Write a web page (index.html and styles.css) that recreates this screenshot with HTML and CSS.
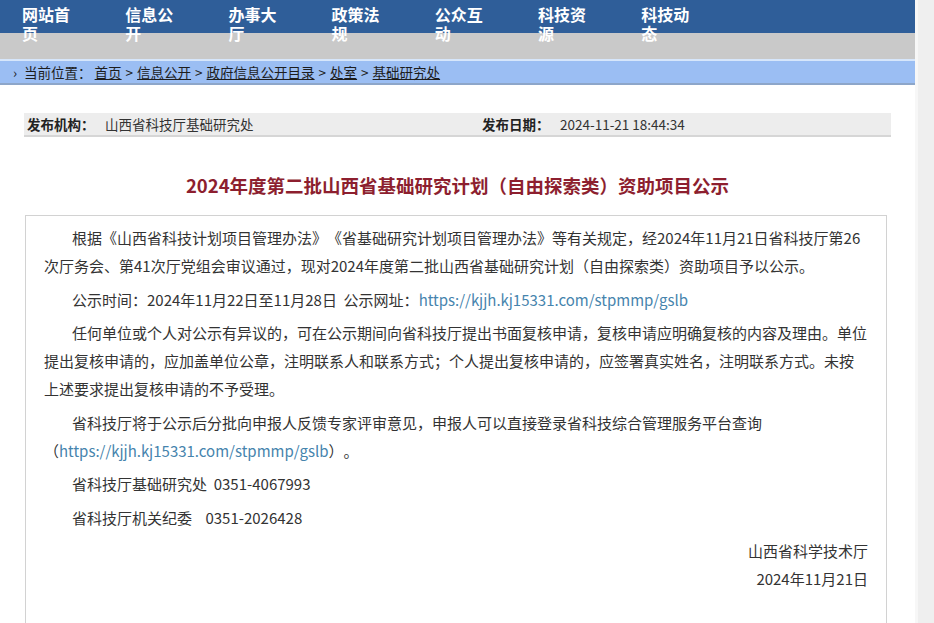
FILE: index.html
```html
<!DOCTYPE html>
<html lang="zh-CN">
<head>
<meta charset="utf-8">
<title>2024年度第二批山西省基础研究计划（自由探索类）资助项目公示</title>
<link rel="stylesheet" href="styles.css">
</head>
<body>
<div class="page">
  <div class="main">
    <nav class="topnav">
      <ul class="navlist">
        <li class="navitem"><span class="navtext">网站首页</span></li>
        <li class="navitem"><span class="navtext">信息公开</span></li>
        <li class="navitem"><span class="navtext">办事大厅</span></li>
        <li class="navitem"><span class="navtext">政策法规</span></li>
        <li class="navitem"><span class="navtext">公众互动</span></li>
        <li class="navitem"><span class="navtext">科技资源</span></li>
        <li class="navitem"><span class="navtext">科技动态</span></li>
      </ul>
    </nav>
    <div class="band"></div>
    <div class="crumb">
      <span class="crumb-arrow">›</span>
      <span class="crumb-label">当前位置：</span>
      <a class="crumb-link" href="#">首页</a><span class="crumb-sep">&gt;</span><a class="crumb-link" href="#">信息公开</a><span class="crumb-sep">&gt;</span><a class="crumb-link" href="#">政府信息公开目录</a><span class="crumb-sep">&gt;</span><a class="crumb-link" href="#">处室</a><span class="crumb-sep">&gt;</span><a class="crumb-link" href="#">基础研究处</a>
    </div>
    <div class="info">
      <span class="info-label">发布机构：</span>
      <span class="info-value">山西省科技厅基础研究处</span>
      <span class="info-label">发布日期：</span>
      <span class="info-value">2024-11-21 18:44:34</span>
    </div>
    <h1 class="title">2024年度第二批山西省基础研究计划（自由探索类）资助项目公示</h1>
    <div class="article">
      <p class="para indent">根据《山西省科技计划项目管理办法》《省基础研究计划项目管理办法》等有关规定，经2024年11月21日省科技厅第26次厅务会、第41次厅党组会审议通过，现对2024年度第二批山西省基础研究计划（自由探索类）资助项目予以公示。</p>
      <p class="para indent">公示时间：2024年11月22日至11月28日&nbsp;&nbsp;公示网址：<a class="url" href="#">https://kjjh.kj15331.com/stpmmp/gslb</a></p>
      <p class="para indent">任何单位或个人对公示有异议的，可在公示期间向省科技厅提出书面复核申请，复核申请应明确复核的内容及理由。单位提出复核申请的，应加盖单位公章，注明联系人和联系方式；个人提出复核申请的，应签署真实姓名，注明联系方式。未按上述要求提出复核申请的不予受理。</p>
      <p class="para indent">省科技厅将于公示后分批向申报人反馈专家评审意见，申报人可以直接登录省科技综合管理服务平台查询（<a class="url" href="#">https://kjjh.kj15331.com/stpmmp/gslb</a>）。</p>
      <p class="para indent">省科技厅基础研究处&nbsp;&nbsp;0351-4067993</p>
      <p class="para indent">省科技厅机关纪委&nbsp;&nbsp;&nbsp;&nbsp;0351-2026428</p>
      <p class="para right">山西省科学技术厅<br>2024年11月21日</p>
    </div>
  </div>
  <div class="rail"></div>
</div>
</body>
</html>
```
FILE: styles.css
```css
* { box-sizing: border-box; }
html, body {
  margin: 0;
  padding: 0;
  height: 100%;
  overflow: hidden;
  background: #ffffff;
  font-family: "Noto Sans CJK SC", "Noto Sans", sans-serif;
  color: #333333;
  text-spacing-trim: space-all;
}
.page {
  display: flex;
  height: 100%;
}
.main {
  width: 915px;
  flex: 0 0 915px;
  background: #ffffff;
}
.rail {
  flex: 1;
  background: #efefef;
  border-left: 3px solid #f7f7f7;
}
.topnav {
  height: 33px;
  background: #2f5e99;
}
.navlist {
  list-style: none;
  margin: 0;
  padding: 5px 0 0 22px;
  display: flex;
}
.navitem {
  flex: 0 0 103.2px;
}
.navtext {
  display: block;
  width: 50px;
  font-size: 16px;
  line-height: 19px;
  font-weight: bold;
  color: #ffffff;
}
.band {
  height: 28px;
  background: #c9c9c9;
  border-bottom: 2px solid #d6e6fb;
}
.crumb {
  height: 24px;
  background: #9bbef3;
  border-bottom: 2px solid #8da6c9;
  display: flex;
  align-items: center;
  padding-left: 13px;
  font-size: 13.5px;
  color: #1d1d1d;
}
.crumb-arrow {
  margin-right: 7px;
}
.crumb-label {
  margin-right: 3px;
}
.crumb-link {
  color: #1d1d1d;
  text-decoration: underline;
}
.crumb-sep {
  margin: 0 4px;
}
.info {
  margin: 28px 24px 0 24px;
  height: 24px;
  background: #ededed;
  border-bottom: 2px solid #d6d6d6;
  display: grid;
  grid-template-columns: 78px 377px 78px 1fr;
  align-items: center;
  padding-left: 3px;
  font-size: 13.5px;
}
.info-label {
  font-weight: bold;
  color: #222222;
}
.info-value {
  color: #333333;
}
.title {
  margin: 33px 0 15px 0;
  text-align: center;
  font-size: 18.5px;
  line-height: 30px;
  font-weight: bold;
  color: #8d1f2f;
}
.article {
  margin: 0 28px 0 25px;
  border: 1px solid #d2d2d2;
  border-bottom: none;
  padding: 8px 18px 80px 18px;
  font-size: 15px;
  line-height: 28px;
  color: #333333;
}
.para {
  margin: 0 0 5.5px 0;
}
.indent {
  text-indent: 28px;
}
.right {
  text-align: right;
}
.url {
  color: #4684ad;
  text-decoration: none;
}
```
